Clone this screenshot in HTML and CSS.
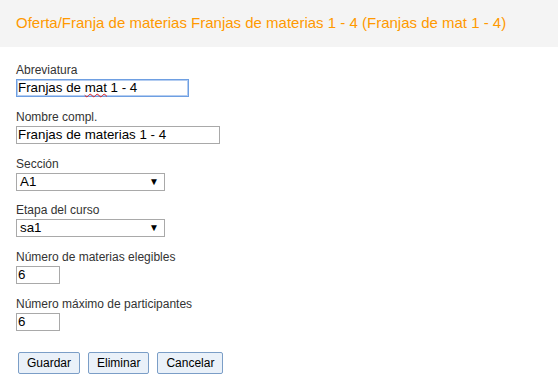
FILE: index.html
```html
<!DOCTYPE html>
<html lang="es">
<head>
<meta charset="utf-8">
<title>Franja de materias</title>
<link rel="stylesheet" href="styles.css">
</head>
<body>
<h1 class="title">Oferta/Franja de materias Franjas de materias 1 - 4 (Franjas de mat 1 - 4)</h1>
<form class="form">
  <div class="field">
    <label class="label">Abreviatura</label>
    <div class="input input-focus w-abbr">Franjas de <span class="spell">mat</span> 1 - 4</div>
  </div>
  <div class="field">
    <label class="label">Nombre compl.</label>
    <div class="input w-name">Franjas de materias 1 - 4</div>
  </div>
  <div class="field">
    <label class="label">Sección</label>
    <div class="input select w-select"><span>A1</span><span class="arrow">▼</span></div>
  </div>
  <div class="field">
    <label class="label">Etapa del curso</label>
    <div class="input select w-select"><span>sa1</span><span class="arrow">▼</span></div>
  </div>
  <div class="field">
    <label class="label">Número de materias elegibles</label>
    <div class="input w-num">6</div>
  </div>
  <div class="field">
    <label class="label">Número máximo de participantes</label>
    <div class="input w-num">6</div>
  </div>
  <div class="buttons">
    <button type="button" class="btn">Guardar</button>
    <button type="button" class="btn">Eliminar</button>
    <button type="button" class="btn">Cancelar</button>
  </div>
</form>
</body>
</html>
```

FILE: styles.css
```css
html, body {
  margin: 0;
  padding: 0;
  background: #ffffff;
  font-family: "Liberation Sans", Arial, sans-serif;
}

.title {
  margin: 0;
  background: #f4f4f4;
  color: #ff9900;
  font-size: 15px;
  font-weight: normal;
  line-height: 18px;
  height: 47px;
  box-sizing: border-box;
  padding: 14px 16px 15px;
  white-space: nowrap;
}

.form {
  padding: 16px 16px 0;
}

.field {
  margin-bottom: 12.8px;
}

.label {
  display: block;
  font-size: 12px;
  line-height: 14px;
  color: #333333;
  margin-bottom: 2px;
}

.input {
  box-sizing: border-box;
  height: 18px;
  border: 1px solid #a9a9a9;
  font-size: 13.33px;
  line-height: 16px;
  padding: 0 1px;
  color: #000000;
  white-space: nowrap;
}

.input-focus {
  border: 1px solid #6e9fe2;
  box-shadow: inset 0 0 0 1px #b4cdf1;
}

.spell {
  text-decoration: underline wavy #e02020;
  text-decoration-thickness: 1px;
  text-underline-offset: 1px;
}

.w-abbr { width: 173px; }
.w-name { width: 204px; }
.w-select { width: 149px; }
.w-num { width: 44px; }

.select {
  display: flex;
  justify-content: space-between;
  align-items: center;
  padding: 0 5px 0 3px;
}

.arrow {
  font-size: 10px;
  line-height: 10px;
  color: #000000;
}

.buttons {
  display: flex;
  gap: 8px;
  margin-top: 21px;
  padding-left: 2px;
}

.btn {
  box-sizing: border-box;
  height: 22px;
  margin: 0;
  padding: 0 8px;
  font-family: "Liberation Sans", Arial, sans-serif;
  font-size: 12px;
  color: #000000;
  background: #eaf1f9;
  border: 1px solid #7b9ec7;
  border-radius: 2px;
}
```
